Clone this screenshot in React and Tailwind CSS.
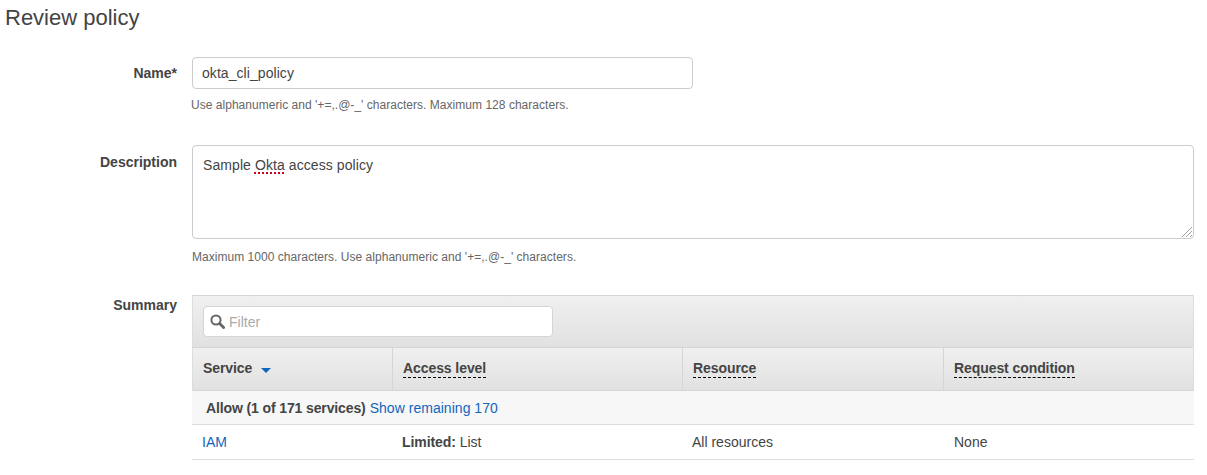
import React from 'react';

const columns = [
  { label: 'Access level', width: 'w-[290px]' },
  { label: 'Resource', width: 'w-[261px]' },
  { label: 'Request condition', width: 'flex-1' },
];

const headerBg = 'bg-gradient-to-b from-[#f0f0f0] to-[#e1e1e1]';

const Field = ({ label, labelClass, children }) => (
  <div className="flex">
    <div className={`w-[177px] shrink-0 text-right text-[14px] leading-[20px] font-bold text-[#444] ${labelClass}`}>
      {label}
    </div>
    <div className="ml-[15px] min-w-0 flex-1">{children}</div>
  </div>
);

const App = () => {
  return (
    <div className="h-[475px] w-[1207px] overflow-hidden bg-white font-['Liberation_Sans',Arial,sans-serif] text-[#444]">
      <h1 className="pl-[5px] pt-[5px] text-[22px] leading-[26px] font-normal text-[#444]">Review policy</h1>

      <div className="mt-[26px] w-[1194px]">
        <Field label="Name*" labelClass="pt-[6px]">
          <input
            readOnly
            value="okta_cli_policy"
            className="block h-[32px] w-[501px] rounded-[4px] border border-[#ccc] bg-white px-[9px] text-[14px] tracking-[0.06px] text-[#444] outline-none"
          />
          <p className="mt-[9px] ml-[-1px] text-[12px] leading-[15px] tracking-[0.03px] text-[#666]">
            Use alphanumeric and '+=,.@-_' characters. Maximum 128 characters.
          </p>
        </Field>

        <div className="mt-[32px]">
          <Field label="Description" labelClass="pt-[7px]">
            <div className="relative h-[94px] rounded-[4px] border border-[#ccc] bg-white px-[10px] pt-[9px] text-[14px] leading-[20px] tracking-[0.08px] text-[#444]">
              Sample{' '}
              <span className="underline decoration-[#d0021b] decoration-dotted decoration-[1.5px] underline-offset-[2px]">
                Okta
              </span>{' '}
              access policy
              <svg className="absolute right-[0px] bottom-[0px]" width="12" height="12" viewBox="0 0 12 12" fill="none">
                <path d="M1 11 L11 1 M5 11 L11 5 M9 11 L11 9" stroke="#8c8c8c" strokeWidth="0.8" />
              </svg>
            </div>
            <p className="mt-[11px] text-[12px] leading-[15px] tracking-[0.03px] text-[#666]">
              Maximum 1000 characters. Use alphanumeric and '+=,.@-_' characters.
            </p>
          </Field>
        </div>

        <div className="mt-[30px]">
          <Field label="Summary">
            <div className="border-x border-[#ddd]">
              <div className={`h-[53px] border-t border-b border-[#d5d5d5] ${headerBg} px-[10px] pt-[10px]`}>
                <div className="flex h-[31px] w-[350px] items-center rounded-[4px] border border-[#d5d5d5] bg-white pl-[6px]">
                  <svg width="15" height="15" viewBox="0 0 15 15" fill="none" className="mb-[1px]">
                    <circle cx="6" cy="6" r="4.6" stroke="#666" strokeWidth="2" />
                    <path d="M9.6 9.6 L13.6 13.6" stroke="#666" strokeWidth="2.8" strokeLinecap="round" />
                  </svg>
                  <span className="ml-[4px] pt-[1px] text-[14px] text-[#aaa]">Filter</span>
                </div>
              </div>

              <div className={`flex h-[43px] items-center border-b border-[#d5d5d5] ${headerBg} text-[14px] font-bold tracking-[-0.08px] text-[#444]`}>
                <div className="flex h-full w-[199px] shrink-0 items-center pb-[1px] pl-[10px]">
                  Service
                  <svg className="ml-[9px] mt-[3px]" width="10" height="5" viewBox="0 0 10 5">
                    <path d="M0 0 H10 L5 5 Z" fill="#1166bb" />
                  </svg>
                </div>
                {columns.map((col) => (
                  <div key={col.label} className={`flex h-full items-center border-l border-[#d5d5d5] pl-[10px] ${col.width}`}>
                    <span className="border-b border-dashed border-black leading-[17px]">{col.label}</span>
                  </div>
                ))}
              </div>
            </div>

            <div className="flex h-[34px] items-center border-b border-[#ddd] bg-[#f7f7f7] pt-[1px] pl-[14px] text-[14px]">
              <span className="font-bold tracking-[-0.12px]">Allow (1 of 171 services)</span>
              <a className="ml-[4px] text-[#1166bb] tracking-[0.03px]">Show remaining 170</a>
            </div>

            <div className="flex h-[35px] items-center border-b border-[#ddd] text-[14px]">
              <a className="w-[200px] shrink-0 pl-[10px] text-[#1166bb]">IAM</a>
              <div className="w-[290px] pl-[10px]">
                <span className="font-bold tracking-[-0.08px]">Limited:</span> List
              </div>
              <div className="w-[262px] pl-[10px]">All resources</div>
              <div className="pl-[10px]">None</div>
            </div>
          </Field>
        </div>
      </div>
    </div>
  );
};

export default App;
